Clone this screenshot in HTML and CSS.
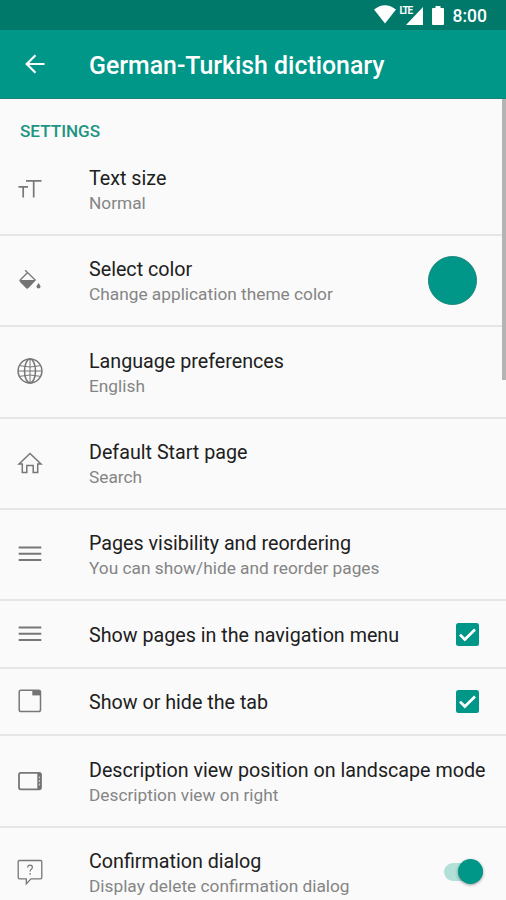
FILE: index.html
```html
<!DOCTYPE html>
<html lang="en">
<head>
<meta charset="utf-8">
<title>Settings</title>
<link rel="stylesheet" href="styles.css">
</head>
<body>
<header>
  <div class="status">
    <svg class="wifi" width="22" height="19" viewBox="0 0 22 19"><path d="M0 4.500Q11-4 22 4.500L11 18.500Z"/></svg>
    <span class="signal"><svg width="17" height="18" viewBox="0 0 17 18"><path d="M0 18L17 0V18Z"/></svg><span class="lte">LTE</span></span>
    <svg class="battery" width="12" height="19" viewBox="0 0 12 19"><path d="M3.500 0h5v2H11q1 0 1 1v15q0 1-1 1H1q-1 0-1-1V3q0-1 1-1h2.500z"/></svg>
    <span class="clock">8:00</span>
  </div>
  <div class="toolbar">
    <svg class="back" width="20" height="20" viewBox="0 0 20 20"><path d="M19.500 10H2M10.500 1.200L1.700 10l8.800 8.800"/></svg>
    <h1>German-Turkish dictionary</h1>
  </div>
</header>
<main>
  <h2>SETTINGS</h2>
  <section class="row">
    <svg class="icon" viewBox="0 0 28 28"><path d="M11 5.800h15.500M18.700 5.800V22.500M3.500 11.800H13M8.200 11.800V22.500" stroke-width="1.700"/></svg>
    <div class="text"><div class="title">Text size</div><div class="sub">Normal</div></div>
  </section>
  <section class="row">
    <svg class="icon" viewBox="0 0 28 28"><path d="M10.200 4.200l10 9.800-7.200 7.500q-.8.700-1.600 0l-6-6q-.9-.9 0-1.800l7-7" stroke-width="1.300"/><path class="solid" d="M4.800 14h15.600l-7.300 8q-.9.800-1.800 0z"/><path class="solid" d="M23.500 17q2 2.600 2 3.500a2 2 0 0 1-4 0q0-.9 2-3.500z"/></svg>
    <div class="text"><div class="title">Select color</div><div class="sub">Change application theme color</div></div>
    <span class="swatch"></span>
  </section>
  <section class="row">
    <svg class="icon" viewBox="0 0 28 28"><circle cx="15" cy="14" r="11.900"/><ellipse cx="15" cy="14" rx="5.500" ry="11.900"/><path d="M15 2v24M3 14h24M5 8.700q10 2.600 20 0M5 19.300q10-2.600 20 0" stroke-width="1"/></svg>
    <div class="text"><div class="title">Language preferences</div><div class="sub">English</div></div>
  </section>
  <section class="row">
    <svg class="icon" viewBox="0 0 28 28"><path d="M4 15L15 4.500 26 15h-3.300v8.500h-4.500v-7h-6.400v7H7.300V15z" stroke-width="1.500"/></svg>
    <div class="text"><div class="title">Default Start page</div><div class="sub">Search</div></div>
  </section>
  <section class="row">
    <svg class="icon" viewBox="0 0 28 28"><path d="M3.700 7.500h22.600M3.700 13.700h22.600M3.700 19.900h22.600" stroke-width="2"/></svg>
    <div class="text"><div class="title">Pages visibility and reordering</div><div class="sub">You can show/hide and reorder pages</div></div>
  </section>
  <section class="row short">
    <svg class="icon" viewBox="0 0 28 28"><path d="M3.700 7.500h22.600M3.700 13.700h22.600M3.700 19.900h22.600" stroke-width="2"/></svg>
    <div class="text"><div class="title">Show pages in the navigation menu</div></div>
    <svg class="check" viewBox="0 0 23 23"><rect width="23" height="23" rx="2.500"/><path d="M4 11.600l4.800 4.900L19 6.500"/></svg>
  </section>
  <section class="row short">
    <svg class="icon" viewBox="0 0 28 28"><rect x="4.200" y="3.200" width="21.300" height="21.300" rx="1.800"/><path class="solid" d="M17.300 4h7.800v4.400h-7.800z"/></svg>
    <div class="text"><div class="title">Show or hide the tab</div></div>
    <svg class="check" viewBox="0 0 23 23"><rect width="23" height="23" rx="2.500"/><path d="M4 11.600l4.800 4.900L19 6.500"/></svg>
  </section>
  <section class="row">
    <svg class="icon" viewBox="0 0 28 28"><rect x="4" y="5.800" width="22" height="16.500" rx="1.800" stroke-width="1.800"/><path class="solid" d="M22.300 6h3.700v16h-3.700z"/><path class="notch" d="M24.300 9.500v2M24.300 13v2M24.300 16.500v2"/></svg>
    <div class="text"><div class="title">Description view position on landscape mode</div><div class="sub">Description view on right</div></div>
  </section>
  <section class="row">
    <svg class="icon" viewBox="0 0 28 28"><path d="M4.500 2.500h21q1.300 0 1.300 1.300v15.700q0 1.300-1.300 1.300H16l-4.700 5v-5H4.500q-1.300 0-1.300-1.300V3.800q0-1.300 1.300-1.300z" stroke-width="1.300"/><path d="M12.700 9.400q0-2.200 2.400-2.200 2.300 0 2.300 2.200c0 1.700-2.300 1.900-2.300 4M15.100 15v1.700" stroke-width="1.200"/></svg>
    <div class="text"><div class="title">Confirmation dialog</div><div class="sub">Display delete confirmation dialog</div></div>
    <span class="switch"></span>
  </section>
  <i class="scrollbar"></i>
</main>
</body>
</html>
```
FILE: styles.css
```css
* { box-sizing: border-box; }
body { margin: 0; height: 900px; overflow: hidden; background: #fafafa; font-family: Roboto, sans-serif; }
.status { height: 30px; background: #00796b; display: flex; align-items: flex-start; padding-left: 373.5px; color: #fff; fill: #fff; }
.wifi { margin-top: 5px; }
.signal { position: relative; margin: 7px 0 0 10px; height: 18px; }
.signal svg { display: block; }
.lte { position: absolute; left: -6px; top: -2px; font: 700 10px/11px Roboto, sans-serif; letter-spacing: -1.300px; }
.battery { margin: 6px 0 0 9.500px; }
.clock { font-size: 17.500px; font-weight: 500; line-height: 32px; margin-left: 8.500px; }
.toolbar { height: 69px; background: #009688; border-bottom: 1px solid #158477; display: flex; align-items: center; padding: 3px 0 0 25px; }
.back { fill: none; stroke: #fff; stroke-width: 2.200; margin-top: -3px; }
h1 { margin: 0 0 0 44px; font-size: 24.850px; font-weight: 500; line-height: 30px; color: #fff; white-space: nowrap; }
main { position: relative; }
h2 { margin: 0; height: 45.400px; padding: 20px 0 0 20px; font-size: 17.100px; line-height: 24px; font-weight: 500; color: #1d9583; }
.row { height: 91.400px; display: flex; align-items: center; border-bottom: 2px solid #e6e6e6; padding: 0 29px 0 15px; }
.short { height: 67.500px; }
.icon { flex: none; width: 28px; height: 28px; margin-top: -1px; fill: none; stroke: #777; stroke-width: 1.500; }
.solid { fill: #737373; stroke: none; }
.icon .notch { stroke: #ddd; stroke-width: 1; }
.text { margin-left: 46px; padding-top: 2.500px; flex: 1; min-width: 0; white-space: nowrap; }
.title { font-size: 19.700px; line-height: 25px; color: #202020; }
.sub { font-size: 17.300px; line-height: 24px; color: #858585; }
.swatch { width: 49px; height: 49px; border-radius: 50%; background: #009688; border: 1px solid #168779; }
.check { width: 23px; height: 23px; margin: 0 -2px 0 0; fill: #009688; }
.check path { fill: none; stroke: #fff; stroke-width: 2.700; }
.switch { position: relative; width: 39px; height: 18px; margin-right: -6px; border-radius: 9px; background: #b2dfd7; }
.switch::after { content: ""; position: absolute; right: 0; top: -4px; width: 25px; height: 25px; border-radius: 50%; background: #009688; box-shadow: 0 1px 3px #0006; }
.scrollbar { position: absolute; right: 0; top: 0; width: 4px; height: 281px; background: #b4b4b4; }
```
